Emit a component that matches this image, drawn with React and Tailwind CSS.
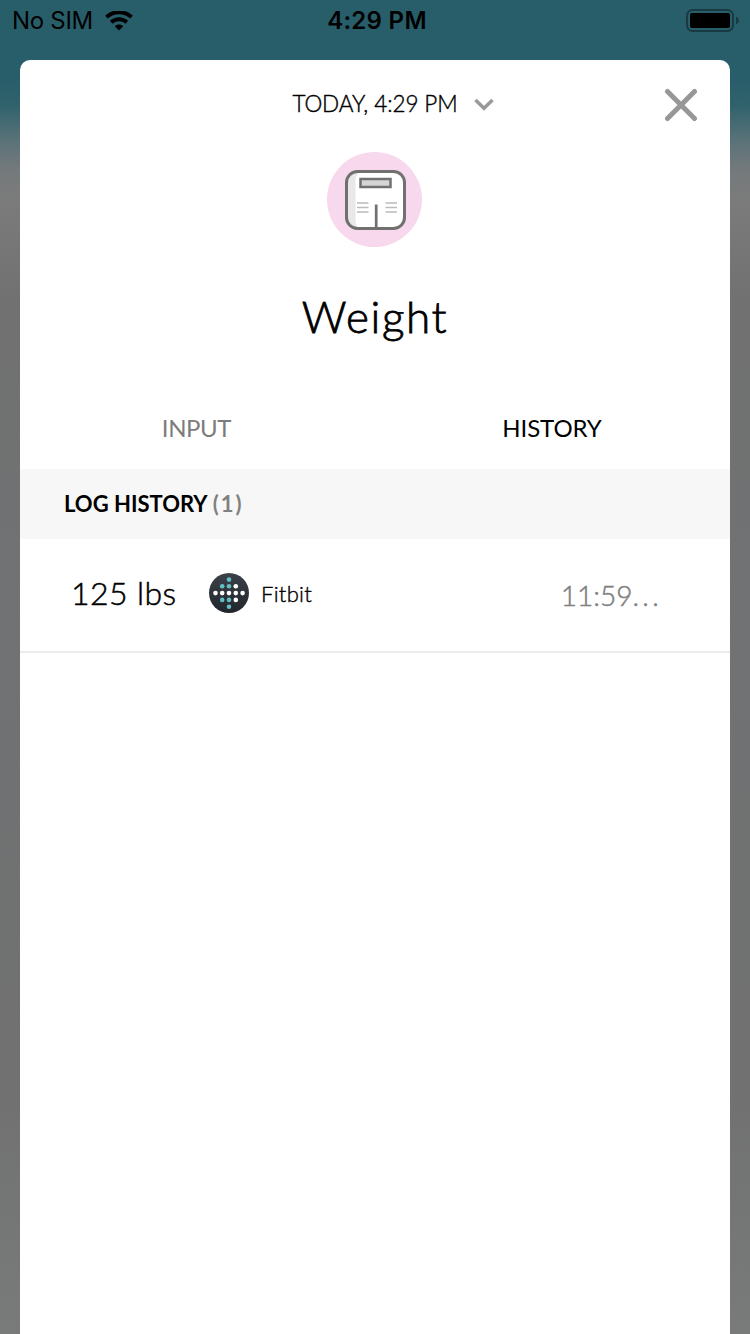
import React from 'react';

const WifiIcon = () => (
  <svg className="h-5 w-7" viewBox="0 0 28 20" fill="none" stroke="#000" strokeWidth="4">
    <path d="M1.5 6.1 C8.6 -0.5 19.4 -0.5 26.5 6.1" />
    <path d="M6.2 11.2 C10.6 7.2 17.4 7.2 21.8 11.2" />
    <path d="M9.7 15.2 C12.1 12.8 15.9 12.8 18.3 15.2 L14 19.5 Z" fill="#000" stroke="none" />
  </svg>
);

const BatteryIcon = () => (
  <svg className="h-6 w-[54px]" viewBox="0 0 54 24">
    <rect x="1" y="1" width="46" height="21" rx="5.5" fill="none" stroke="#183a42" strokeWidth="2" />
    <rect x="4" y="4" width="40" height="15" rx="2" fill="#000" />
    <path d="M50 7.5 C53.8 9 53.8 14 50 15.5 Z" fill="#183a42" />
  </svg>
);

const ScaleIcon = () => (
  <svg className="h-[61px] w-[62px]" viewBox="0 0 62 61" fill="none">
    <rect x="2" y="1.5" width="58" height="57.3" rx="11" fill="#fff" />
    <path d="M14 3 C6 3 3 7 3 13 V48 C3 54 6 58 14 58 C11 56 10.5 53 10.5 48 V13 C10.5 8 11 5 14 3 Z" fill="#e8e8e8" />
    <rect x="1.5" y="1.5" width="58" height="57" rx="11" stroke="#707070" strokeWidth="3" />
    <rect x="15.5" y="9" width="30" height="8" fill="#d5d5d5" stroke="#707070" strokeWidth="2.5" />
    <path d="M31.2 34.5 V58" stroke="#707070" strokeWidth="2.7" />
    <path
      d="M12 33 h11.5 M12 37.5 h11.5 M12 42 h11.5 M40.5 33 h11.5 M40.5 37.5 h11.5 M40.5 42 h11.5"
      stroke="#bbb"
      strokeWidth="1.3"
    />
  </svg>
);

const dots = [
  [20, 6.6, 't'],
  [13.2, 13.3, 't'], [20, 13.3, 't'], [26.8, 13.3, 'w'],
  [6.5, 20.1, 'w'], [13.2, 20.1, 'w'], [20, 20.1, 'w'], [26.8, 20.1, 'w'], [33.6, 20.1, 'w'],
  [13.2, 26.9, 't'], [20, 26.9, 't'], [26.8, 26.9, 'w'],
  [20, 33.7, 't'],
];

const FitbitIcon = () => (
  <svg className="h-10 w-10 shrink-0" viewBox="0 0 40 40">
    <defs>
      <linearGradient id="fitbit" x1="0" y1="0" x2="0" y2="1">
        <stop offset="0" stopColor="#3c4048" />
        <stop offset="1" stopColor="#21252c" />
      </linearGradient>
    </defs>
    <circle cx="20" cy="20" r="20" fill="url(#fitbit)" />
    {dots.map(([x, y, tone]) => (
      <circle key={`${x}-${y}`} cx={x} cy={y} r="2.3" fill={tone === 't' ? '#62bfc1' : '#fff'} />
    ))}
  </svg>
);

const StatusBar = () => (
  <div className="grid h-10 grid-cols-3 items-center pr-[10px] pl-3 pt-px font-['Inter',sans-serif] text-black">
    <div className="flex items-center gap-3">
      <span className="pt-px text-2xl tracking-[-0.3px] whitespace-nowrap">No SIM</span>
      <WifiIcon />
    </div>
    <span className="pt-px pl-0.5 text-center text-2xl font-semibold tracking-[0.3px]">4:29 PM</span>
    <div className="flex justify-end">
      <BatteryIcon />
    </div>
  </div>
);

const App = () => {
  return (
    <div className="flex h-[1334px] w-[750px] flex-col overflow-hidden bg-[linear-gradient(to_bottom,#285e6a_0px,#285e6a_80px,#30626c_105px,#587178_138px,#747a7c_170px,#7b7b7b_200px,#717171_300px,#707273_600px,#717171_1100px,#747675_1200px,#787b7a_1334px)]">
      <StatusBar />
      <div className="mx-5 mt-5 flex flex-1 flex-col rounded-t-[10px] bg-white font-['Lato',sans-serif] text-black">
        <header className="grid h-[92px] grid-cols-[1fr_auto_1fr] items-center pb-0.5">
          <div />
          <button className="flex items-center gap-4 pb-0.5 pl-9">
            <span className="text-[22.5px] leading-8 font-light tracking-[-0.1px] whitespace-nowrap [-webkit-text-stroke:0.4px]">TODAY, 4:29 PM</span>
            <svg className="h-5 w-5" viewBox="0 0 20 20" fill="none" stroke="#999" strokeWidth="3.5">
              <path d="M1.5 6 L10 14.2 L18.5 6" />
            </svg>
          </button>
          <button className="justify-self-end pr-8" aria-label="Close">
            <svg className="h-[34px] w-[34px]" viewBox="0 0 34 34" fill="none" stroke="#979797" strokeWidth="5" strokeLinecap="round">
              <path d="M3.5 3.5 L30.5 30.5 M30.5 3.5 L3.5 30.5" />
            </svg>
          </button>
        </header>

        <div className="flex flex-col items-center">
          <div className="mr-px flex h-[95px] w-[95px] items-center justify-center rounded-full bg-[#f7d8ed] pt-px pl-0.5">
            <ScaleIcon />
          </div>
          <h1 className="mt-[39px] mb-px text-[44px] leading-[60px] font-light tracking-[1.6px] [-webkit-text-stroke:0.8px]">Weight</h1>
        </div>

        {/* Tabs */}
        <div className="mt-10 grid h-[82px] grid-cols-2 text-center text-2xl leading-[82px]">
          <span className="pr-0.5 tracking-[-0.4px] text-[#7c7c7c]">INPUT</span>
          <span className="pr-px tracking-[-0.1px]">HISTORY</span>
        </div>

        <div className="flex h-[70px] items-center gap-[5px] bg-[#f7f7f7] px-11 pb-0.5 text-[22px]">
          <span className="font-bold">LOG HISTORY</span>
          <span className="font-bold tracking-[2px] text-[#808080]">(1)</span>
        </div>

        {/* Log entry */}
        <div className="flex h-[114px] items-center border-b-2 border-[#ebebeb] pr-[68px] pb-1 pl-[51px]">
          <span className="w-[138px] text-[32px] font-light tracking-[0.4px] whitespace-nowrap [-webkit-text-stroke:0.5px]">125 lbs</span>
          <FitbitIcon />
          <span className="ml-3 text-[22px] font-light tracking-[0.3px] [-webkit-text-stroke:0.4px]">Fitbit</span>
          <span className="mt-1 ml-auto text-[28px] font-light text-[#808080] [-webkit-text-stroke:0.5px]">
            11:59<span className="tracking-[3.3px]">...</span>
          </span>
        </div>
      </div>
    </div>
  );
};

export default App;
